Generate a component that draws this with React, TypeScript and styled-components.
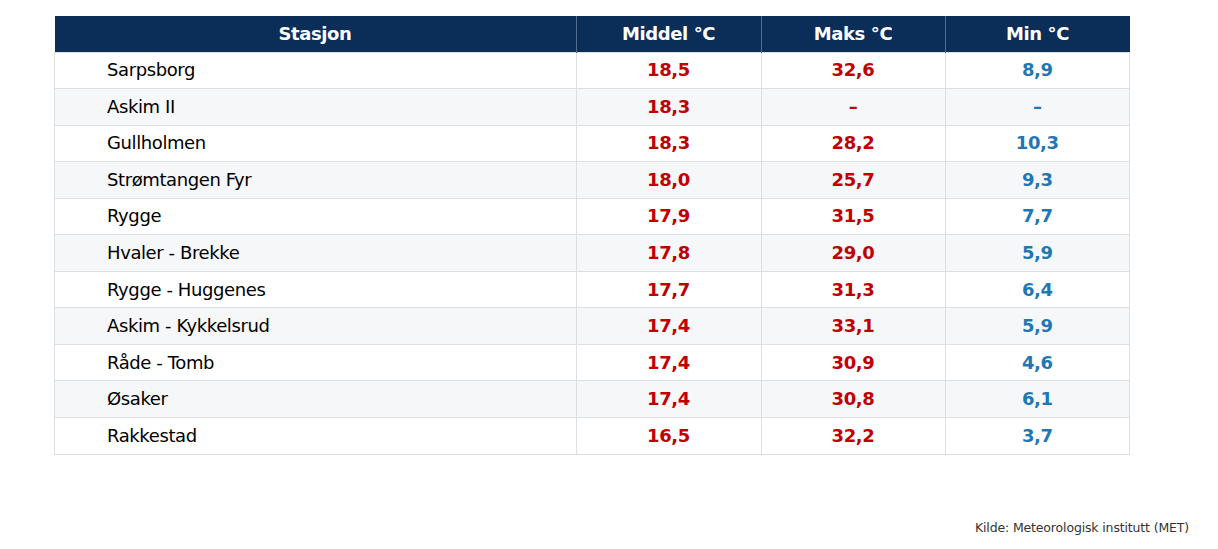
import React from "react";
import styled, { createGlobalStyle } from "styled-components";

const Global = createGlobalStyle`
  html, body { margin: 0; padding: 0; background: #ffffff; }
  body { font-family: "DejaVu Sans", Verdana, sans-serif; }
`;

const Page = styled.div`
  width: 1218px;
  height: 549px;
  box-sizing: border-box;
  padding: 16px 0 0 54px;
  display: flex;
  flex-direction: column;
  align-items: flex-start;
  position: relative;
`;

const Table = styled.table`
  width: auto;
  border-collapse: collapse;
  table-layout: fixed;
  font-size: 18px;
  letter-spacing: -0.4px;
`;

const HeadCell = styled.th<{ $w: number }>`
  width: ${(p) => p.$w}px;
  height: 35.5px;
  padding: 0;
  background: #0b2e59;
  color: #ffffff;
  font-weight: bold;
  text-align: center;
  border-left: 1px solid #566c8a;
  &:first-child { border-left: none; }
`;

const Row = styled.tr<{ $alt: boolean }>`
  height: 36.55px;
  background: ${(p) => (p.$alt ? "#f6f7f9" : "#ffffff")};
`;

const NameCell = styled.td`
  padding: 0 0 1px 52px;
  color: #000000;
  border: 1px solid #dcdfe4;
`;

const ValueCell = styled.td<{ $tone: "warm" | "cold" }>`
  padding: 0 0 1px 0;
  text-align: center;
  font-weight: bold;
  color: ${(p) => (p.$tone === "warm" ? "#c00000" : "#1f77b4")};
  border: 1px solid #dcdfe4;
`;

const Source = styled.div`
  position: absolute;
  right: 29px;
  bottom: 14px;
  font-size: 12.5px;
  letter-spacing: -0.15px;
  color: #333333;
`;

const rows: [string, string, string, string][] = [
  ["Sarpsborg", "18,5", "32,6", "8,9"],
  ["Askim II", "18,3", "–", "–"],
  ["Gullholmen", "18,3", "28,2", "10,3"],
  ["Strømtangen Fyr", "18,0", "25,7", "9,3"],
  ["Rygge", "17,9", "31,5", "7,7"],
  ["Hvaler - Brekke", "17,8", "29,0", "5,9"],
  ["Rygge - Huggenes", "17,7", "31,3", "6,4"],
  ["Askim - Kykkelsrud", "17,4", "33,1", "5,9"],
  ["Råde - Tomb", "17,4", "30,9", "4,6"],
  ["Øsaker", "17,4", "30,8", "6,1"],
  ["Rakkestad", "16,5", "32,2", "3,7"],
];

export default function App() {
  return (
    <>
      <Global />
      <Page>
        <Table>
          <thead>
            <tr>
              <HeadCell $w={521}>Stasjon</HeadCell>
              <HeadCell $w={184}>Middel °C</HeadCell>
              <HeadCell $w={183}>Maks °C</HeadCell>
              <HeadCell $w={184}>Min °C</HeadCell>
            </tr>
          </thead>
          <tbody>
            {rows.map((r, i) => (
              <Row key={r[0]} $alt={i % 2 === 1}>
                <NameCell>{r[0]}</NameCell>
                <ValueCell $tone="warm">{r[1]}</ValueCell>
                <ValueCell $tone="warm">{r[2]}</ValueCell>
                <ValueCell $tone="cold">{r[3]}</ValueCell>
              </Row>
            ))}
          </tbody>
        </Table>
        <Source>Kilde: Meteorologisk institutt (MET)</Source>
      </Page>
    </>
  );
}
